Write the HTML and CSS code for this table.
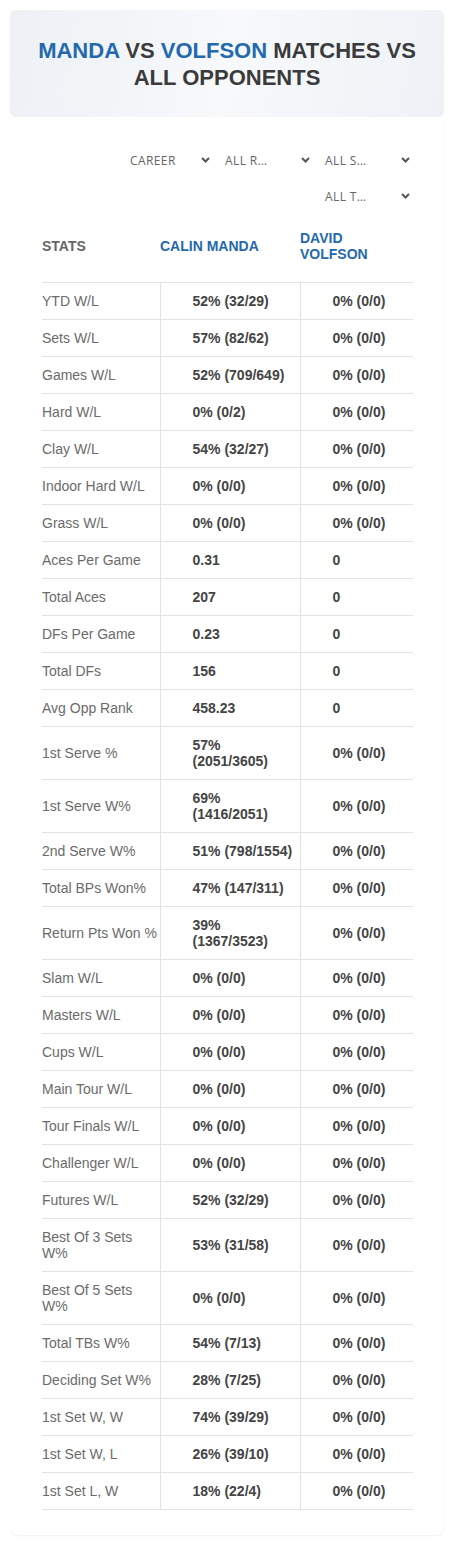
FILE: index.html
```html
<!DOCTYPE html>
<html>
<head>
    <title>Manda vs Volfson Matches vs All Opponents</title>
    <link rel="stylesheet" href="styles.css">
</head>
<body>
    <div class="card">
        <div class="page-header">
            <h1><span class="player">Manda</span> vs <span class="player">Volfson</span> matches vs all opponents</h1>
        </div>

        <div class="content">
            <div class="filters">
                <div class="filter"><span>CAREER</span><svg class="chevron" width="9" height="6" viewBox="0 0 9 6"><path d="M1 1l3.5 3.5L8 1"/></svg></div>
                <div class="filter"><span>ALL R…</span><svg class="chevron" width="9" height="6" viewBox="0 0 9 6"><path d="M1 1l3.5 3.5L8 1"/></svg></div>
                <div class="filter"><span>ALL S…</span><svg class="chevron" width="9" height="6" viewBox="0 0 9 6"><path d="M1 1l3.5 3.5L8 1"/></svg></div>
                <div class="filter"><span>ALL T…</span><svg class="chevron" width="9" height="6" viewBox="0 0 9 6"><path d="M1 1l3.5 3.5L8 1"/></svg></div>
            </div>

            <table class="stats">
                <colgroup>
                    <col class="col-label">
                    <col class="col-value">
                    <col class="col-opp">
                </colgroup>
                <thead>
                    <tr>
                        <th>Stats</th>
                        <th class="name">Calin Manda</th>
                        <th class="name">David Volfson</th>
                    </tr>
                </thead>
                <tbody>
                    <tr><td>YTD W/L</td><td>52% (32/29)</td><td>0% (0/0)</td></tr>
                    <tr><td>Sets W/L</td><td>57% (82/62)</td><td>0% (0/0)</td></tr>
                    <tr><td>Games W/L</td><td>52% (709/649)</td><td>0% (0/0)</td></tr>
                    <tr><td>Hard W/L</td><td>0% (0/2)</td><td>0% (0/0)</td></tr>
                    <tr><td>Clay W/L</td><td>54% (32/27)</td><td>0% (0/0)</td></tr>
                    <tr><td>Indoor Hard W/L</td><td>0% (0/0)</td><td>0% (0/0)</td></tr>
                    <tr><td>Grass W/L</td><td>0% (0/0)</td><td>0% (0/0)</td></tr>
                    <tr><td>Aces Per Game</td><td>0.31</td><td>0</td></tr>
                    <tr><td>Total Aces</td><td>207</td><td>0</td></tr>
                    <tr><td>DFs Per Game</td><td>0.23</td><td>0</td></tr>
                    <tr><td>Total DFs</td><td>156</td><td>0</td></tr>
                    <tr><td>Avg Opp Rank</td><td>458.23</td><td>0</td></tr>
                    <tr><td>1st Serve %</td><td>57% (2051/3605)</td><td>0% (0/0)</td></tr>
                    <tr><td>1st Serve W%</td><td>69% (1416/2051)</td><td>0% (0/0)</td></tr>
                    <tr><td>2nd Serve W%</td><td>51% (798/1554)</td><td>0% (0/0)</td></tr>
                    <tr><td>Total BPs Won%</td><td>47% (147/311)</td><td>0% (0/0)</td></tr>
                    <tr><td>Return Pts Won %</td><td>39% (1367/3523)</td><td>0% (0/0)</td></tr>
                    <tr><td>Slam W/L</td><td>0% (0/0)</td><td>0% (0/0)</td></tr>
                    <tr><td>Masters W/L</td><td>0% (0/0)</td><td>0% (0/0)</td></tr>
                    <tr><td>Cups W/L</td><td>0% (0/0)</td><td>0% (0/0)</td></tr>
                    <tr><td>Main Tour W/L</td><td>0% (0/0)</td><td>0% (0/0)</td></tr>
                    <tr><td>Tour Finals W/L</td><td>0% (0/0)</td><td>0% (0/0)</td></tr>
                    <tr><td>Challenger W/L</td><td>0% (0/0)</td><td>0% (0/0)</td></tr>
                    <tr><td>Futures W/L</td><td>52% (32/29)</td><td>0% (0/0)</td></tr>
                    <tr><td>Best Of 3 Sets W%</td><td>53% (31/58)</td><td>0% (0/0)</td></tr>
                    <tr><td>Best Of 5 Sets W%</td><td>0% (0/0)</td><td>0% (0/0)</td></tr>
                    <tr><td>Total TBs W%</td><td>54% (7/13)</td><td>0% (0/0)</td></tr>
                    <tr><td>Deciding Set W%</td><td>28% (7/25)</td><td>0% (0/0)</td></tr>
                    <tr><td>1st Set W, W</td><td>74% (39/29)</td><td>0% (0/0)</td></tr>
                    <tr><td>1st Set W, L</td><td>26% (39/10)</td><td>0% (0/0)</td></tr>
                    <tr><td>1st Set L, W</td><td>18% (22/4)</td><td>0% (0/0)</td></tr>
                </tbody>
            </table>
        </div>
    </div>
</body>
</html>
```

FILE: styles.css
```css
body {
    margin: 0;
    padding: 10px 11px 10px 10px;
    font-family: "Liberation Sans", Arial, sans-serif;
    background-color: #fff;
}
.card {
    background-color: #fff;
    border-radius: 8px;
    box-shadow: 0 1px 2px rgba(0, 0, 0, 0.06);
}
.page-header {
    height: 107px;
    display: flex;
    align-items: center;
    justify-content: center;
    padding: 0 20px;
    box-sizing: border-box;
    border-radius: 6px;
    background: linear-gradient(100deg, #edf1f5 0%, #f7f9fb 50%, #eef2f6 100%);
}
h1 {
    margin: 0;
    font-size: 22px;
    line-height: 27px;
    font-weight: bold;
    text-align: center;
    text-transform: uppercase;
    color: #3b3b3b;
}
h1 .player {
    color: #2469ad;
}
.content {
    padding: 25px 31px 25px 32px;
}
.filters {
    display: flex;
    flex-wrap: wrap;
    justify-content: flex-end;
}
.filter {
    width: 100px;
    height: 36px;
    box-sizing: border-box;
    padding: 0 3px 0 12px;
    display: flex;
    align-items: center;
    justify-content: space-between;
    font-family: "Open Sans", sans-serif;
    font-size: 12px;
    letter-spacing: 0.4px;
    color: #666;
}
.filter:first-child {
    padding-left: 17px;
}
.chevron {
    fill: none;
    stroke: #555;
    stroke-width: 2;
}
.stats {
    width: 371px;
    table-layout: fixed;
    border-collapse: collapse;
    font-size: 14px;
    line-height: 16px;
}
.col-label {
    width: 118px;
}
.col-value {
    width: 140px;
}
.col-opp {
    width: 113px;
}
.stats th {
    text-align: left;
    text-transform: uppercase;
    font-weight: bold;
    color: #666;
    padding: 16px 0 20px 0;
    border-bottom: 1px solid #e1e4e6;
    vertical-align: middle;
}
.stats th.name {
    color: #2469ad;
}
.stats td {
    padding: 10px 4px 10px 32px;
    border-bottom: 1px solid #e1e4e6;
    border-left: 1px solid #e1e4e6;
    font-weight: bold;
    color: #444;
    vertical-align: middle;
}
.stats td:first-child {
    padding: 10px 0;
    border-left: none;
    font-weight: normal;
    color: #6b6b6b;
}
```
